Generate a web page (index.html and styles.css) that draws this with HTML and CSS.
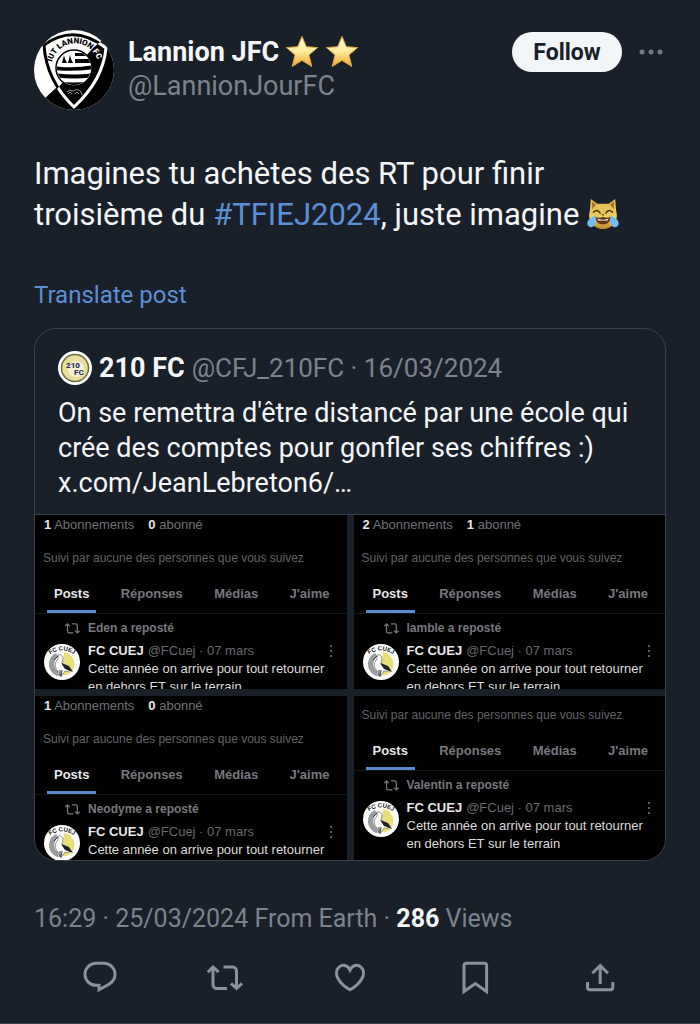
FILE: index.html
```html
<!DOCTYPE html>
<html lang="fr">
<head>
<meta charset="UTF-8">
<meta name="viewport" content="width=device-width, initial-scale=1">
<title>Lannion JFC</title>
<link rel="stylesheet" href="styles.css">
</head>
<body>

<!-- shared shapes -->
<svg class="defs" aria-hidden="true">
  <defs>
    <linearGradient id="gold" x1="0" y1="0" x2="0" y2="1">
      <stop offset="0" stop-color="#fffbe0"/>
      <stop offset="0.5" stop-color="#fdea9c"/>
      <stop offset="1" stop-color="#e9a82c"/>
    </linearGradient>
    <linearGradient id="fur" x1="0" y1="0" x2="0" y2="1">
      <stop offset="0" stop-color="#dfb84f"/>
      <stop offset="0.6" stop-color="#ecd05c"/>
      <stop offset="1" stop-color="#b98a2b"/>
    </linearGradient>
    <symbol id="star" viewBox="0 0 34 34">
      <path d="M17 1.5l4.3 10.2 11.3.9-8.6 7.4 2.8 11.5-9.8-6.1-9.8 6.1 2.8-11.5-8.6-7.4 11.3-.9z" fill="url(#gold)" stroke="#d8a63c" stroke-width="1" stroke-linejoin="round"/>
    </symbol>
    <symbol id="retweet" viewBox="0 0 36 36">
      <path d="M6 7v17.5a4 4 0 0 0 4 4h10M.8 12.2L6 7l5.6 5.2M16.500 7h9a4 4 0 0 1 4 4v17.500M24 23.300l5.500 5.200 5.500-5.200" fill="none" stroke="currentColor" stroke-width="3"/>
    </symbol>
    <symbol id="stork" viewBox="0 0 36 36">
      <circle cx="18" cy="18" r="18" fill="#fff"/>
      <path d="M20 8a12 12 0 0 1 3 23c-4 1-6-1-5-6z" fill="#e9df78"/>
      <path d="M12 9c-7 3-9 12-5 18 2 3 5 5 8 5l-1-5c-5-3-5-10 0-15z" fill="#9a9c9e"/>
      <path d="M14 11c3-1 5 1 5 4l-1 4 8 5c1 3-2 4-5 3l-4 6-3-6c-4-4-3-9 0-12z" fill="#fff" stroke="#777" stroke-width=".8"/>
      <path d="M17 19l8 3 4 6-8-3z" fill="#222"/>
      <path d="M14 12l-4 4" stroke="#333" stroke-width="1"/>
      <path d="M16 26v6M18 26l-1 6" stroke="#555" stroke-width="1.200"/>
      <path id="storkArc" d="M6 10.500Q18 2 30 10.500" fill="none"/>
      <text class="stork-text"><textPath href="#storkArc" startOffset="50%" text-anchor="middle">FC CUEJ</textPath></text>
    </symbol>
    <symbol id="dots" viewBox="0 0 4 14">
      <circle cx="2" cy="2" r="1"/><circle cx="2" cy="7" r="1"/><circle cx="2" cy="12" r="1"/>
    </symbol>
  </defs>
</svg>

<main class="post">
  <header class="post-header">
    <svg class="avatar" viewBox="0 0 80 80" role="img" aria-label="IUT Lannion FC">
      <defs>
        <clipPath id="round"><circle cx="40" cy="40" r="40"/></clipPath>
        <clipPath id="right"><path d="M66 12L90-5v95H5l6-22 12-9L59 18z"/></clipPath>
        <clipPath id="globe"><circle cx="40" cy="38" r="17"/></clipPath>
      </defs>
      <g clip-path="url(#round)">
        <rect width="80" height="80" fill="#fff"/>
        <path d="M66 12L90-5v95H5l6-22 11-10L40 40z" fill="#000"/>
        <path d="M10 15Q40-7 72 18Q69 50 40 77Q12 50 10 15z" fill="#fff" stroke="#000" stroke-width="3"/>
        <g clip-path="url(#right)">
          <path d="M10 15Q40-7 72 18Q69 50 40 77Q12 50 10 15z" fill="#000" stroke="#fff" stroke-width="3"/>
        </g>
      </g>
      <circle cx="40" cy="38" r="18" fill="#fff" stroke="#000" stroke-width="1.500"/>
      <g clip-path="url(#globe)" fill="#000">
        <path d="M41 23h20v3H41zM41 29h20v4H41zM20 36q20 3 40-1v4q-20 3-40 1zM20 43q20 3 40 0v4q-20 3-40 0zM20 51q20 3 40 0v4q-20 2-40 0z"/>
        <path d="M30 25l1 4 2 4h-5l1-4zM36 25l1 4 2 4h-5l1-4z"/>
      </g>
      <path d="M33 62q2-3 6-1 5-3 8 1l1 3M34 64l2-2 2 2M41 64l2-2 2 2" fill="none" stroke="#999" stroke-width="1"/>
      <path id="crest" d="M18 32A23 23 0 0 1 64 42" fill="none"/>
      <text class="crest-text"><textPath href="#crest">IUT LANNION <tspan fill="#fff">FC</tspan></textPath></text>
    </svg>
    <div class="author">
      <div class="author-name">Lannion JFC
        <svg class="star" role="img" aria-label="étoile"><use href="#star"/></svg><svg class="star" role="img" aria-label="étoile"><use href="#star"/></svg>
      </div>
      <div class="author-handle">@LannionJourFC</div>
    </div>
    <button class="follow" type="button">Follow</button>
    <button class="more" type="button" aria-label="More">
      <svg viewBox="0 0 24 6"><circle cx="3" cy="3" r="2.500"/><circle cx="12" cy="3" r="2.500"/><circle cx="21" cy="3" r="2.500"/></svg>
    </button>
  </header>

  <p class="post-text">Imagines tu achètes des RT pour finir<br>troisième du <a href="#">#TFIEJ2024</a>, juste imagine
    <svg class="cat" viewBox="0 0 34 34" role="img" aria-label="chat qui pleure de rire">
      <path d="M4 1l7 5h12l7-5 1 13c2 6 0 12-5 16-5 4-13 4-18 0-5-4-7-10-5-16z" fill="url(#fur)"/>
      <path d="M5.500 4l4 3-4 5zM28.500 4l-4 3 4 5z" fill="#a06d3c"/>
      <path d="M7 15q4-4 7 1M20 16q3-5 7-1" fill="none" stroke="#4a3416" stroke-width="1.600" stroke-linecap="round"/>
      <path d="M15.500 17h3L17 19z" fill="#6c4526"/>
      <path d="M9 20q4 2 8 0 4 2 8 0c0 6-4 8-8 8s-8-2-8-8z" fill="#60351c"/>
      <path d="M11 22q6 2 12 0l-1 2H12z" fill="#fff"/>
      <path d="M9 18c1 7 0 13-4.500 13S-1 26 2 23zM25 18c-1 7 0 13 4.500 13S35 26 32 23z" fill="#75baf2"/>
    </svg>
  </p>

  <a class="translate" href="#">Translate post</a>

  <article class="quote">
    <div class="quote-body">
      <div class="quote-head">
        <svg class="quote-avatar" viewBox="0 0 34 34" role="img" aria-label="210 FC">
          <circle cx="17" cy="17" r="17" fill="#fff"/>
          <circle cx="17" cy="17" r="13.500" fill="#e9df9a" stroke="#6d6c45" stroke-width="1.500"/>
          <circle cx="18" cy="18" r="8" fill="#f6f1d4"/>
          <text x="8" y="17">210</text>
          <text x="16" y="24">FC</text>
        </svg>
        <strong>210 FC</strong>
        <span class="muted">@CFJ_210FC · 16/03/2024</span>
      </div>
      <p class="quote-text">On se remettra d'être distancé par une école qui crée des comptes pour gonfler ses chiffres :) x.com/JeanLebreton6/…</p>
    </div>

    <div class="gallery">
      <section class="shot">
        <div class="stats"><span><b>1</b> Abonnements</span><span><b>0</b> abonné</span></div>
        <p class="followed">Suivi par aucune des personnes que vous suivez</p>
        <nav class="tabs"><a class="active" href="#">Posts</a><a href="#">Réponses</a><a href="#">Médias</a><a href="#">J'aime</a></nav>
        <div class="repost"><svg><use href="#retweet"/></svg>Eden a reposté</div>
        <div class="tweet">
          <svg class="tweet-avatar"><use href="#stork"/></svg>
          <div class="tweet-main">
            <div class="tweet-head"><b>FC CUEJ</b><span>@FCuej · 07 mars</span><svg class="tweet-more"><use href="#dots"/></svg></div>
            <p>Cette année on arrive pour tout retourner<br>en dehors ET sur le terrain</p>
          </div>
        </div>
      </section>

      <section class="shot">
        <div class="stats"><span><b>2</b> Abonnements</span><span><b>1</b> abonné</span></div>
        <p class="followed">Suivi par aucune des personnes que vous suivez</p>
        <nav class="tabs"><a class="active" href="#">Posts</a><a href="#">Réponses</a><a href="#">Médias</a><a href="#">J'aime</a></nav>
        <div class="repost"><svg><use href="#retweet"/></svg>lamble a reposté</div>
        <div class="tweet">
          <svg class="tweet-avatar"><use href="#stork"/></svg>
          <div class="tweet-main">
            <div class="tweet-head"><b>FC CUEJ</b><span>@FCuej · 07 mars</span><svg class="tweet-more"><use href="#dots"/></svg></div>
            <p>Cette année on arrive pour tout retourner<br>en dehors ET sur le terrain</p>
          </div>
        </div>
      </section>

      <section class="shot">
        <div class="stats"><span><b>1</b> Abonnements</span><span><b>0</b> abonné</span></div>
        <p class="followed">Suivi par aucune des personnes que vous suivez</p>
        <nav class="tabs"><a class="active" href="#">Posts</a><a href="#">Réponses</a><a href="#">Médias</a><a href="#">J'aime</a></nav>
        <div class="repost"><svg><use href="#retweet"/></svg>Neodyme a reposté</div>
        <div class="tweet">
          <svg class="tweet-avatar"><use href="#stork"/></svg>
          <div class="tweet-main">
            <div class="tweet-head"><b>FC CUEJ</b><span>@FCuej · 07 mars</span><svg class="tweet-more"><use href="#dots"/></svg></div>
            <p>Cette année on arrive pour tout retourner</p>
          </div>
        </div>
      </section>

      <section class="shot shot-short">
        <p class="followed">Suivi par aucune des personnes que vous suivez</p>
        <nav class="tabs"><a class="active" href="#">Posts</a><a href="#">Réponses</a><a href="#">Médias</a><a href="#">J'aime</a></nav>
        <div class="repost"><svg><use href="#retweet"/></svg>Valentin a reposté</div>
        <div class="tweet">
          <svg class="tweet-avatar"><use href="#stork"/></svg>
          <div class="tweet-main">
            <div class="tweet-head"><b>FC CUEJ</b><span>@FCuej · 07 mars</span><svg class="tweet-more"><use href="#dots"/></svg></div>
            <p>Cette année on arrive pour tout retourner<br>en dehors ET sur le terrain</p>
          </div>
        </div>
      </section>
    </div>
  </article>

  <div class="meta">16:29 · 25/03/2024 From Earth · <strong>286</strong> Views</div>

  <div class="actions">
    <button type="button" aria-label="Reply"><svg viewBox="0 0 36 36"><path d="M14 3.300h8a11 11 0 0 1 11 11c0 4.500-2.500 8-6.500 10.200L17 29.700v-4.400h-3a11 11 0 0 1 0-22z"/></svg></button>
    <button type="button" aria-label="Repost"><svg><use href="#retweet"/></svg></button>
    <button type="button" aria-label="Like"><svg viewBox="0 0 36 36"><path d="M18 10C15.500 4.800 10.500 4.300 7.300 6.900 3.800 9.800 3.800 14.500 6 18.500c2.500 4.500 7 8.500 12 11.300 5-2.800 9.500-6.800 12-11.300 2.200-4 2.200-8.700-1.300-11.600C25.500 4.300 20.500 4.800 18 10z"/></svg></button>
    <button type="button" aria-label="Bookmark"><svg viewBox="0 0 36 36"><path d="M7 31.500V5.500a2.300 2.300 0 0 1 2.300-2.300h18a2.300 2.300 0 0 1 2.300 2.300v26l-11.300-8z"/></svg></button>
    <button type="button" aria-label="Share"><svg viewBox="0 0 36 36"><path d="M5.500 22v5.300a2.500 2.500 0 0 0 2.500 2.500h20.300a2.500 2.500 0 0 0 2.500-2.500V22M18.200 24V5.500M10.400 13.300l7.800-7.800 7.800 7.800"/></svg></button>
  </div>
</main>

</body>
</html>
```

FILE: styles.css
```css
* {
  box-sizing: border-box;
}

body {
  margin: 0;
  background: #1a202a;
  color: #f4f6f8;
  font-family: Roboto, "Liberation Sans", sans-serif;
}

p {
  margin: 0;
}

a {
  color: #5c90d6;
  text-decoration: none;
}

button {
  border: 0;
  padding: 0;
  background: none;
  font-family: inherit;
  cursor: pointer;
}

svg {
  display: block;
  flex: none;
}

.defs {
  position: absolute;
  width: 0;
  height: 0;
}

.post {
  padding: 30px 34px 27px;
  border-bottom: 1px solid #3a4049;
}

/* header */
.post-header {
  display: flex;
  align-items: flex-start;
}

.avatar {
  width: 80px;
  height: 80px;
}

.crest-text {
  font-size: 8px;
  font-weight: 900;
}

.author {
  flex: 1;
  padding: 5px 0 0 14px;
}

.author-name {
  display: flex;
  align-items: center;
  gap: 6px;
  font-size: 27px;
  font-weight: 700;
  line-height: 34px;
}

.star {
  width: 34px;
  height: 34px;
}

.author-handle {
  color: #7b838d;
  font-size: 27px;
  line-height: 34px;
}

.follow {
  width: 110px;
  height: 40px;
  margin: 2px 17px 0 0;
  border-radius: 20px;
  background: #f2f6f8;
  color: #1a202a;
  font-size: 23px;
  font-weight: 700;
}

.more {
  width: 24px;
  height: 44px;
  margin-right: 3px;
}

.more svg {
  width: 24px;
  height: 6px;
  fill: #747b85;
}

/* post text */
.post-text {
  margin-top: 43px;
  font-size: 31px;
  line-height: 41px;
}

.cat {
  display: inline-block;
  width: 32px;
  height: 32px;
  vertical-align: -5px;
}

.translate {
  display: inline-block;
  margin: 44px 0 17px;
  font-size: 24px;
  line-height: 32px;
  vertical-align: top;
}

/* quoted post */
.quote {
  overflow: hidden;
  border: 1px solid #39414b;
  border-radius: 22px;
}

.quote-body {
  padding: 22px 23px 13px;
}

.quote-head {
  display: flex;
  align-items: center;
  gap: 7px;
  font-size: 27px;
  line-height: 34px;
  white-space: nowrap;
}

.quote-avatar {
  width: 34px;
  height: 34px;
}

.quote-avatar text {
  fill: #2b3466;
  font-size: 8px;
  font-weight: 900;
}

.muted {
  color: #7b838d;
  font-size: 26px;
}

.quote-text {
  margin-top: 11px;
  font-size: 27px;
  line-height: 35px;
}

/* screenshots */
.gallery {
  display: grid;
  grid-template-columns: 1fr 1fr;
  grid-template-rows: 174px 164px;
  gap: 7px;
  border-top: 1px solid #39414b;
}

.shot {
  overflow: hidden;
  background: #000;
  color: #dcdcdc;
  font-family: "Liberation Sans", Arial, sans-serif;
  font-size: 13px;
  line-height: 18px;
}

.shot-short {
  padding-top: 9px;
}

.stats {
  display: flex;
  gap: 14px;
  margin-bottom: 13px;
  padding-left: 9px;
  color: #6f7276;
  line-height: 20px;
}

.stats b {
  color: #e8e8e8;
}

.followed {
  padding-left: 8px;
  color: #606367;
  font-size: 12px;
  line-height: 20px;
}

.tabs {
  display: flex;
  justify-content: space-between;
  padding: 0 10px 0 12px;
  border-bottom: 1px solid #15171a;
}

.tabs a {
  padding: 16px 7px 6px;
  border-bottom: 3px solid transparent;
  color: #77797f;
  font-weight: 700;
  line-height: 20px;
}

.tabs .active {
  border-color: #5c8ccf;
  color: #e8e8e8;
}

.repost {
  display: flex;
  align-items: center;
  gap: 8px;
  padding: 5px 0 5px 30px;
  color: #77797f;
  font-size: 12px;
  font-weight: 700;
}

.repost svg {
  width: 15px;
  height: 15px;
}

.tweet {
  display: flex;
  gap: 8px;
  padding: 0 14px 0 9px;
}

.tweet-avatar {
  width: 36px;
  height: 36px;
  margin-top: 2px;
}

.stork-text {
  fill: #111;
  font-size: 6px;
  font-weight: 900;
}

.tweet-main {
  flex: 1;
  white-space: nowrap;
}

.tweet-head {
  display: flex;
  align-items: center;
  gap: 4px;
  color: #66696d;
}

.tweet-head b {
  color: #e8e8e8;
}

.tweet-more {
  width: 4px;
  height: 14px;
  margin-left: auto;
  fill: #77797f;
}

/* footer */
.meta {
  margin-top: 42px;
  color: #7b838d;
  font-size: 25px;
  line-height: 32px;
}

.meta strong {
  color: #f4f6f8;
}

.actions {
  display: grid;
  grid-template-columns: repeat(5, 1fr);
  justify-items: center;
  margin-top: 25px;
  padding: 0 4px;
}

.actions button {
  color: #8b929c;
}

.actions svg {
  width: 36px;
  height: 36px;
  fill: none;
  stroke: currentColor;
  stroke-width: 3;
}
```
